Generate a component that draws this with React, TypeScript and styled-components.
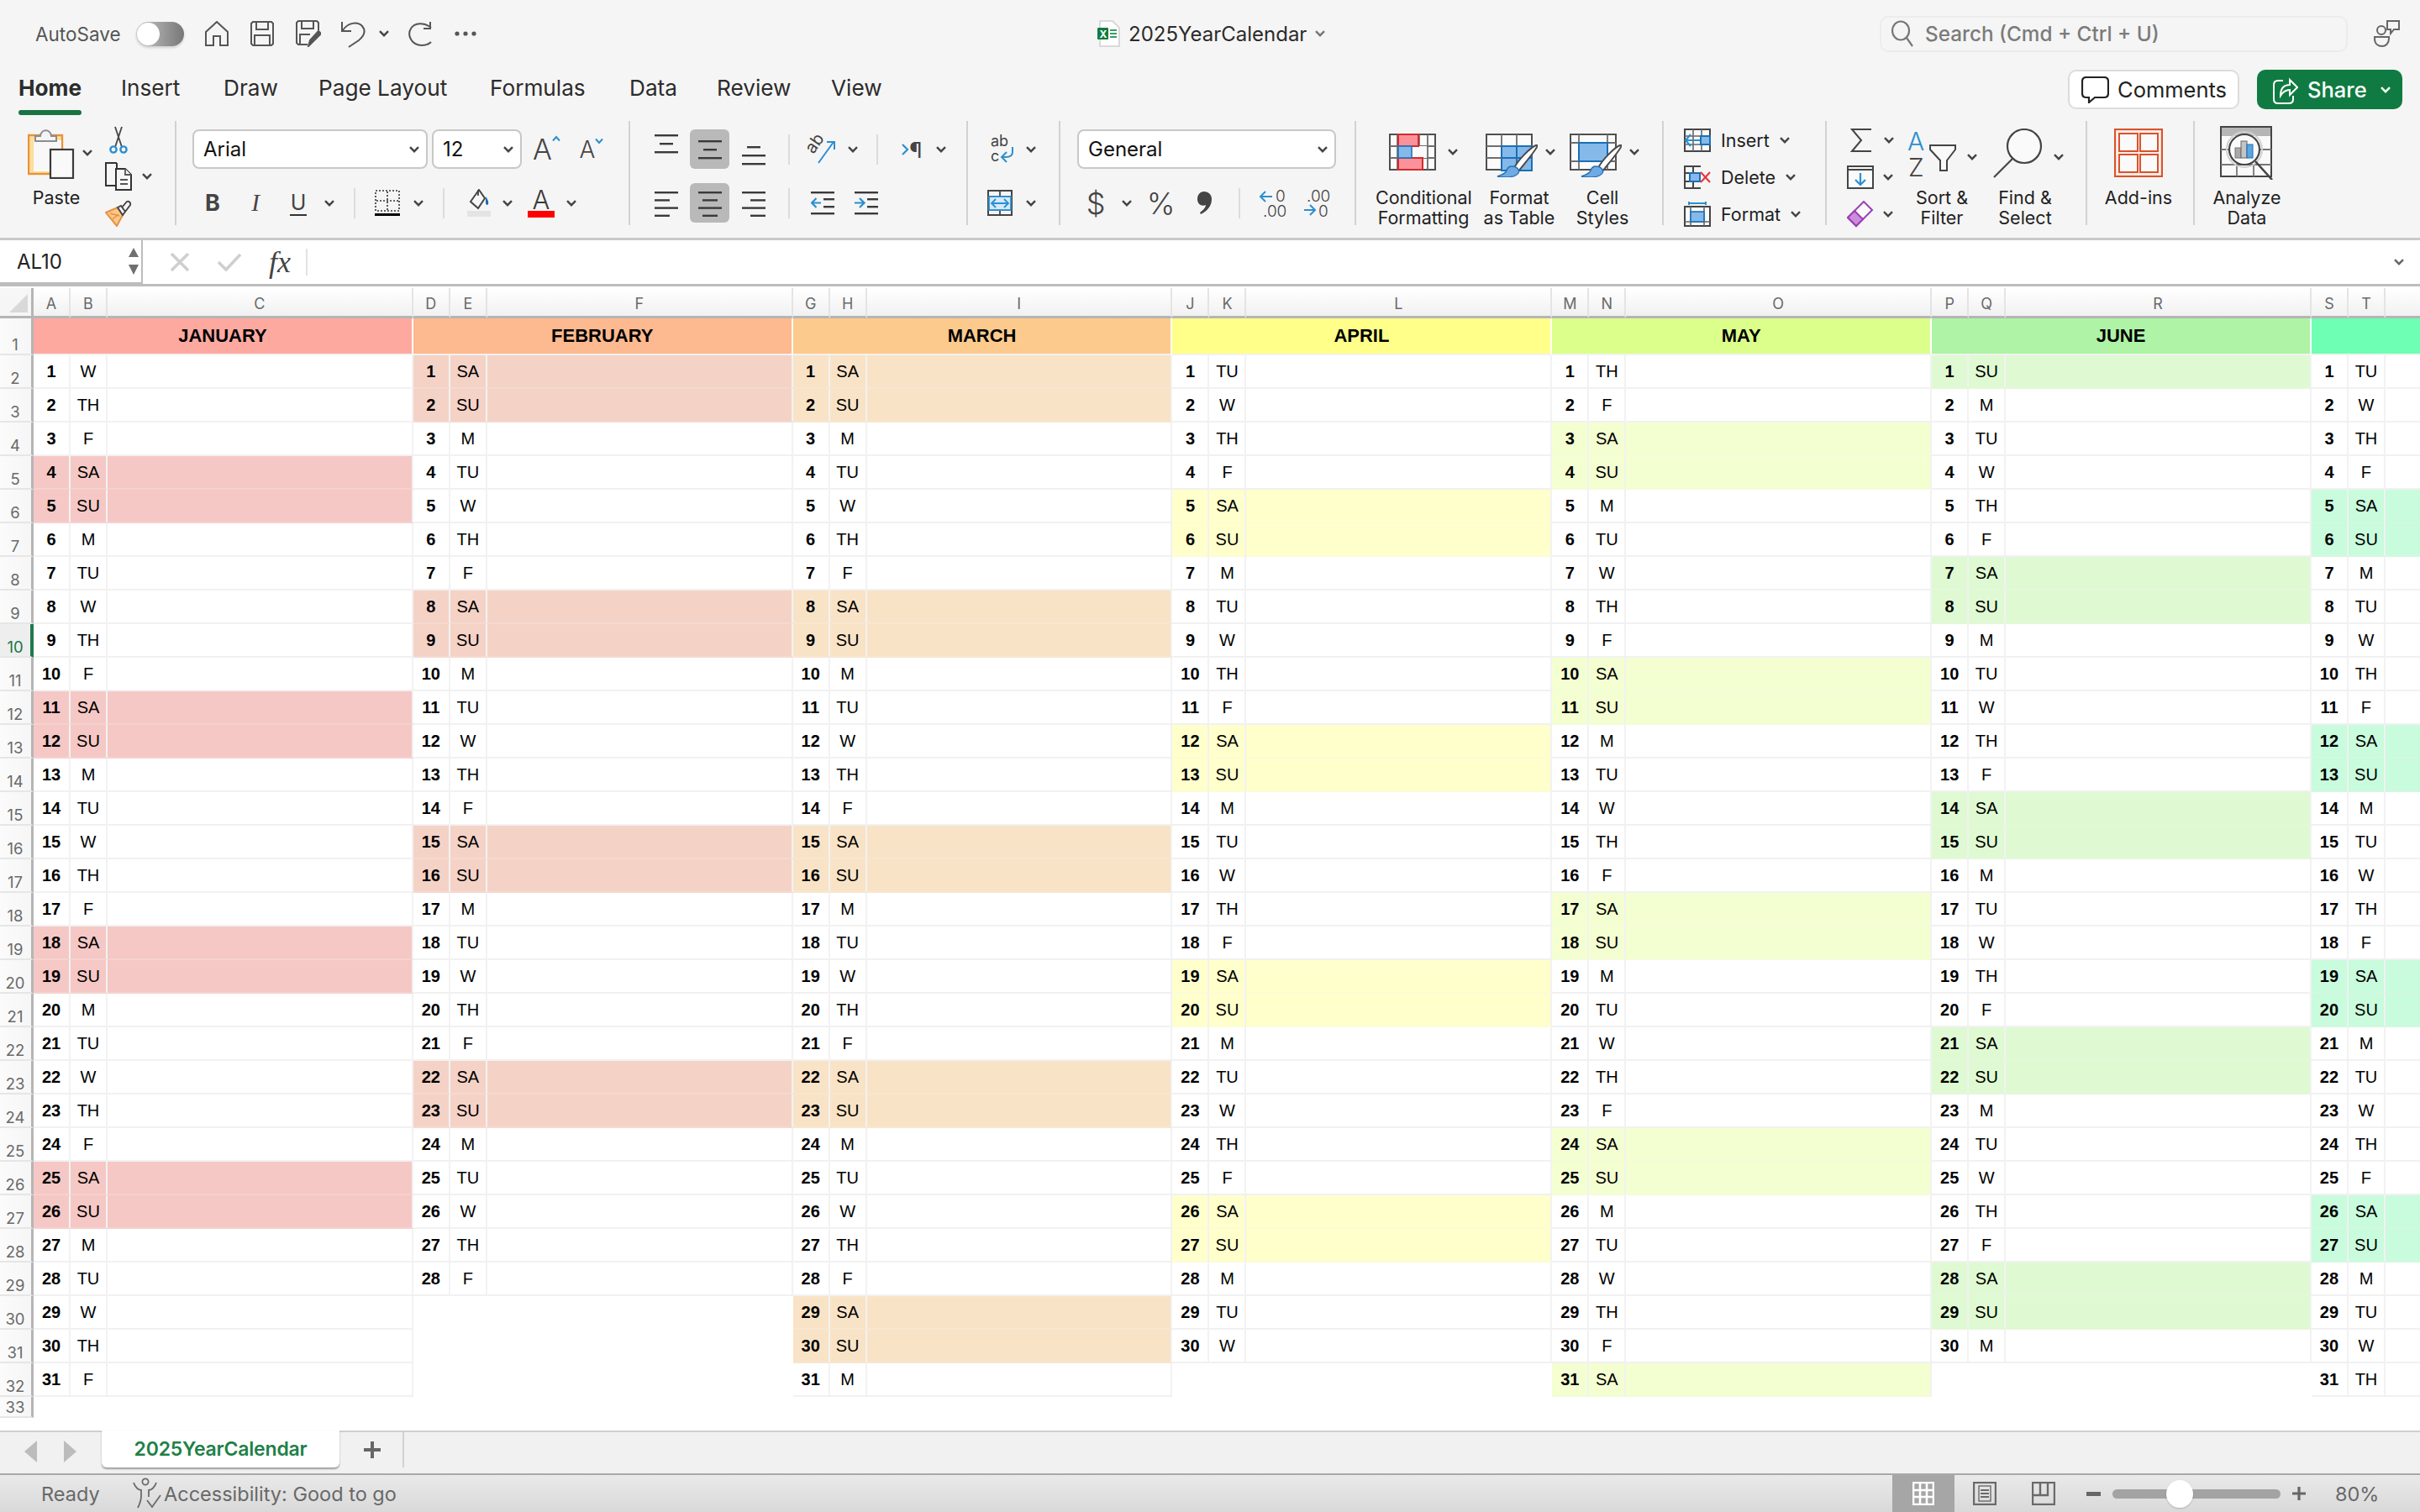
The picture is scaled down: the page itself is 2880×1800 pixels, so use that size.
import React from "react";
import styled, { createGlobalStyle } from "styled-components";

const UI_FONT = `Inter, "Noto Sans", sans-serif`;
const SHEET_FONT = `"Liberation Sans", Arial, sans-serif`;
const BLUE = "#2b8fd0";

const GlobalStyle = createGlobalStyle`
  html, body { margin: 0; padding: 0; background: #fff; }
  body { font-family: ${UI_FONT}; color: #222; overflow: hidden; }
  #root { width: 2880px; height: 1800px; }
  * { box-sizing: border-box; }
`;

const Page = styled.div`
  width: 2880px;
  height: 1800px;
  display: flex;
  flex-direction: column;
  overflow: hidden;
`;

/* ---------- title bar ---------- */

const TitleBar = styled.header`
  height: 66px;
  flex: none;
  background: #f5f5f5;
  padding-top: 14px;
  display: grid;
  grid-template-columns: 1306px 280px 1fr;
  align-items: center;
`;

const QuickBar = styled.div`
  display: flex;
  align-items: center;
  padding-left: 42px;
`;

const AutoSaveLabel = styled.span`
  width: 100px;
  font-size: 22.5px;
  color: #555;
  white-space: nowrap;
`;

const Toggle = styled.span`
  width: 57px;
  height: 29px;
  margin-left: 20px;
  border-radius: 15px;
  background: linear-gradient(90deg, #c9c9c9, #777);
  position: relative;
  box-shadow: 0 2px 3px rgba(0, 0, 0, 0.15);
  &::after {
    content: "";
    position: absolute;
    left: 1px;
    top: 1px;
    width: 27px;
    height: 27px;
    border-radius: 50%;
    background: #fff;
  }
`;

const Tool = styled.span<{ $ml?: number; $w?: number }>`
  display: inline-flex;
  align-items: center;
  justify-content: center;
  flex: none;
  margin-left: ${(p) => p.$ml ?? 0}px;
  ${(p) => (p.$w ? `width: ${p.$w}px;` : "")}
`;

const DocTitle = styled.div`
  display: flex;
  align-items: center;
  svg { flex: none; }
`;

const DocName = styled.span`
  margin-left: 10px;
  width: 213px;
  font-size: 24px;
  color: #2b2b2b;
  white-space: nowrap;
`;

const SearchArea = styled.div`
  display: flex;
  align-items: center;
  padding-left: 651px;
`;

const SearchBox = styled.div`
  width: 557px;
  height: 43px;
  border: 2px solid #ececec;
  border-radius: 10px;
  display: flex;
  align-items: center;
  padding-left: 12px;
  font-size: 24.3px;
  font-weight: 500;
  color: #7b7b7b;
  span { margin-left: 14px; }
`;

/* ---------- ribbon tabs ---------- */

const TabRow = styled.nav`
  height: 74px;
  flex: none;
  background: #f5f5f5;
  display: flex;
  align-items: center;
  padding: 3px 21px 0 22px;
`;

const RibbonTab = styled.span<{ $w: number; $active?: boolean }>`
  width: ${(p) => p.$w}px;
  font-size: 26.2px;
  font-weight: ${(p) => (p.$active ? 700 : 400)};
  color: #2c2c2c;
  position: relative;
  white-space: nowrap;
  ${(p) =>
    p.$active
      ? `&::after { content: ""; position: absolute; left: 0; top: 42px; width: 75px; height: 6px; border-radius: 3px; background: #1a7343; }`
      : ""}
`;

const TabActions = styled.div`
  margin-left: auto;
  display: flex;
  gap: 21px;
  margin-top: 4px;
`;

const CommentsButton = styled.div`
  width: 204px;
  height: 47px;
  background: #fff;
  border: 2px solid #dcdcdc;
  border-radius: 10px;
  display: flex;
  align-items: center;
  padding-left: 14px;
  font-size: 25.5px;
  color: #222;
  span { margin-left: 10px; }
`;

const ShareButton = styled.div`
  width: 173px;
  height: 47px;
  background: #0f7b42;
  border-radius: 10px;
  display: flex;
  align-items: center;
  padding-left: 19px;
  font-size: 25.5px;
  font-weight: 500;
  color: #fff;
  span { margin-left: 11px; width: 87px; }
`;

/* ---------- ribbon ---------- */

const Ribbon = styled.section`
  height: 146px;
  flex: none;
  background: #f5f5f5;
  border-bottom: 3px solid #c9c9c9;
  display: flex;
  align-items: flex-start;
  padding-top: 4px;
`;

const Group = styled.div<{ $w: number; $last?: boolean }>`
  width: ${(p) => p.$w}px;
  height: 124px;
  flex: none;
  display: flex;
  ${(p) => (p.$last ? "" : "border-right: 2px solid #d2d2d2;")}
  box-sizing: content-box;
`;

const Stack = styled.div`
  display: flex;
  flex-direction: column;
`;

const ClipTools = styled.div`
  display: flex;
  flex-direction: column;
  align-items: flex-start;
  padding-top: 6px;
`;

const CopyRow = styled.div`
  display: flex;
  align-items: center;
  margin: 9px 0 11px;
`;

const ToolRow = styled.div<{ $mt: number }>`
  display: flex;
  align-items: center;
  height: 47px;
  margin-top: ${(p) => p.$mt}px;
`;

const Select = styled.div<{ $w: number; $ml: number }>`
  width: ${(p) => p.$w}px;
  height: 47px;
  margin-left: ${(p) => p.$ml}px;
  flex: none;
  background: #fff;
  border: 2px solid #c8c8c8;
  border-radius: 8px;
  display: flex;
  align-items: center;
  justify-content: space-between;
  padding: 0 8px 0 11px;
  font-size: 24px;
  color: #111;
`;

const ThinLine = styled.span<{ $ml: number }>`
  width: 2px;
  height: 36px;
  flex: none;
  margin-left: ${(p) => p.$ml}px;
  background: #dcdcdc;
`;

const ActiveTool = styled.span<{ $ml: number }>`
  width: 47px;
  height: 47px;
  flex: none;
  margin-left: ${(p) => p.$ml}px;
  background: #b9b9b9;
  border-radius: 6px;
  display: inline-flex;
  align-items: center;
  justify-content: center;
`;

const BoldGlyph = styled.span`
  font-size: 27px;
  font-weight: 700;
  color: #444;
`;

const ItalicGlyph = styled.span`
  font-family: "Liberation Serif", serif;
  font-style: italic;
  font-size: 29px;
  color: #444;
`;

const UnderGlyph = styled.span`
  font-size: 25px;
  color: #444;
  line-height: 28px;
  border-bottom: 2px solid #333;
  padding: 0 1px;
`;

const GrowGlyph = styled.span<{ $size: number }>`
  font-size: ${(p) => p.$size}px;
  font-weight: 300;
  color: #444;
  line-height: 1;
  display: inline-flex;
  align-items: flex-start;
`;

const NumGlyph = styled.span<{ $size: number }>`
  font-size: ${(p) => p.$size}px;
  font-weight: 300;
  color: #444;
  line-height: 1;
`;

const LargeButton = styled.div<{ $w: number; $ml?: number }>`
  width: ${(p) => p.$w}px;
  margin-left: ${(p) => p.$ml ?? 0}px;
  flex: none;
  display: flex;
  flex-direction: column;
`;

const LargeIcons = styled.div<{ $top: number; $center?: boolean }>`
  height: 79px;
  flex: none;
  padding-top: ${(p) => p.$top}px;
  display: flex;
  align-items: flex-start;
  ${(p) => (p.$center ? "justify-content: center;" : "")}
  svg { display: block; }
`;

const ChevronSlot = styled.span<{ $ml: number; $mt: number }>`
  margin-left: ${(p) => p.$ml}px;
  margin-top: ${(p) => p.$mt}px;
  flex: none;
  display: inline-flex;
`;

const LargeLabel = styled.div`
  font-size: 21.5px;
  line-height: 24px;
  color: #222;
  text-align: center;
  white-space: nowrap;
`;

const CellRow = styled.div`
  height: 44px;
  display: flex;
  align-items: center;
  padding-left: 24px;
  font-size: 21.5px;
  color: #222;
  white-space: nowrap;
`;

const CellStack = styled.div`
  padding-top: 1px;
`;

const EditRow = styled.div`
  height: 44px;
  display: flex;
  align-items: center;
  width: 87px;
`;

/* ---------- formula bar ---------- */

const FormulaBar = styled.div`
  height: 55px;
  flex: none;
  background: #fff;
  border-bottom: 3px solid #bdbdbd;
  display: flex;
  align-items: center;
`;

const NameBox = styled.div`
  width: 170px;
  height: 52px;
  flex: none;
  border: 2px solid #bcbcbc;
  border-left: none;
  border-top: none;
  display: flex;
  align-items: center;
  justify-content: space-between;
  padding: 0 2px 0 20px;
  font-size: 24px;
  color: #222;
`;

const FxGlyph = styled.span`
  font-family: "Liberation Serif", serif;
  font-style: italic;
  font-size: 36px;
  color: #444;
  width: 30px;
  margin-left: 32px;
`;

const FxDivider = styled.span`
  width: 2px;
  height: 32px;
  margin-left: 14px;
  background: #e2e2e2;
`;

const FormulaEnd = styled.span`
  margin-left: auto;
  margin-right: 19px;
  display: inline-flex;
`;

/* ---------- sheet ---------- */

const Sheet = styled.div`
  flex: 1;
  min-height: 0;
  overflow: hidden;
  background: #fff;
  padding-top: 2px;
`;

const SheetGrid = styled.div`
  display: grid;
  grid-template-columns: 40px repeat(7, 44px 44px 363.83px);
  grid-template-rows: 36px 44px repeat(31, 40px) 25px 40px;
  width: 3260px;
`;

const Corner = styled.div`
  background: #f6f6f6;
  border-right: 3px solid #b5b5b5;
  border-bottom: 3px solid #b5b5b5;
  display: flex;
  align-items: flex-end;
  justify-content: flex-end;
  padding: 0 4px 4px 0;
`;

const ColHead = styled.div`
  background: linear-gradient(#fff, #f1f1f1);
  border-right: 2px solid #e4e4e4;
  border-bottom: 3px solid #b5b5b5;
  display: flex;
  align-items: center;
  justify-content: center;
  padding-top: 3px;
  font-size: 18px;
  color: #6a6a6a;
`;

const RowHead = styled.div<{ $on?: boolean }>`
  background: ${(p) => (p.$on ? "#eeeeee" : "linear-gradient(90deg, #fbfbfb, #f6f6f6)")};
  border-right: ${(p) => (p.$on ? "4px solid #1f7a4d" : "3px solid #b5b5b5")};
  border-bottom: 2px solid #e6e6e6;
  display: flex;
  align-items: flex-end;
  justify-content: center;
  padding-right: ${(p) => (p.$on ? "0" : "1px")};
  font-size: 18.5px;
  line-height: 22px;
  color: ${(p) => (p.$on ? "#217346" : "#6a6a6a")};
`;

const MonthHead = styled.div<{ $fill: string }>`
  grid-column: span 3;
  background: ${(p) => p.$fill};
  border-right: 2px solid #fff;
  border-bottom: 2px solid #f2f2f2;
  display: flex;
  align-items: center;
  justify-content: center;
  padding-bottom: 1px;
  font-family: ${SHEET_FONT};
  font-size: 22px;
  font-weight: 700;
  color: #000;
`;

const DayCell = styled.div<{ $fill?: string; $bold?: boolean; $blank?: boolean }>`
  background: ${(p) => p.$fill ?? "#fff"};
  ${(p) =>
    p.$blank
      ? ""
      : `border-right: 2px solid #f2f2f2; border-bottom: 2px solid ${p.$fill ? "#f4eeee40" : "#f1f1f1"};`}
  display: flex;
  align-items: center;
  justify-content: center;
  font-family: ${SHEET_FONT};
  font-size: 20px;
  font-weight: ${(p) => (p.$bold ? 700 : 400)};
  color: #000;
`;

const SheetEdge = styled.div`
  background: #fff;
`;

/* ---------- sheet tabs and status ---------- */

const SheetTabs = styled.div`
  height: 51px;
  flex: none;
  background: #f1f1f1;
  border-top: 2px solid #cfcfcf;
  display: flex;
  align-items: flex-start;
`;

const TabNav = styled.div`
  width: 121px;
  height: 46px;
  display: flex;
  align-items: center;
  padding-left: 29px;
  gap: 32px;
`;

const ActiveSheet = styled.div`
  width: 283px;
  height: 44px;
  margin-top: -2px;
  background: #fff;
  border-radius: 0 0 6px 6px;
  box-shadow: 0 1.5px 2px rgba(0, 0, 0, 0.35);
  display: flex;
  align-items: center;
  justify-content: center;
  font-size: 23px;
  font-weight: 600;
  color: #1f8048;
  letter-spacing: -0.2px;
`;

const AddSheet = styled.div`
  width: 77px;
  height: 42px;
  padding-left: 3px;
  border-right: 2px solid #d2d2d2;
  display: flex;
  align-items: center;
  justify-content: center;
`;

const StatusBar = styled.footer`
  height: 46px;
  flex: none;
  background: linear-gradient(#e9e9e9, #d9d9d9);
  border-top: 2px solid #a9a9a9;
  display: flex;
  align-items: center;
  padding-left: 49px;
  font-size: 23.5px;
  color: #686868;
`;

const Ready = styled.span`
  width: 109px;
`;

const A11yText = styled.span`
  margin-left: 3px;
  white-space: nowrap;
`;

const StatusRight = styled.div`
  margin-left: auto;
  height: 100%;
  display: flex;
  align-items: center;
`;

const ViewButton = styled.span<{ $on?: boolean; $w: number }>`
  width: ${(p) => p.$w}px;
  height: 100%;
  display: inline-flex;
  align-items: center;
  justify-content: center;
  ${(p) => (p.$on ? "background: #a6a6a6;" : "")}
`;

const ZoomTrack = styled.span`
  width: 200px;
  height: 11px;
  margin-left: 14px;
  border-radius: 6px;
  background: #a3a3a3;
  position: relative;
  &::after {
    content: "";
    position: absolute;
    left: 64px;
    top: -11px;
    width: 32px;
    height: 33px;
    border-radius: 50%;
    background: #fff;
    box-shadow: 0 1px 2px rgba(0, 0, 0, 0.2);
  }
`;

const ZoomValue = styled.span`
  width: 51px;
  margin: 0 50px 0 35px;
  white-space: nowrap;
`;

/* ---------- icons ---------- */

const Chevron = ({ color = "#444" }: { color?: string }) => (
  <svg width="12" height="8" viewBox="0 0 12 8" fill="none">
    <path d="M1 1.2 6 6.2 11 1.2" stroke={color} strokeWidth="2.4" />
  </svg>
);

const Lines = ({ widths, top, gap = 10 }: { widths: number[]; top: number; gap?: number }) => (
  <svg width="28" height="40" viewBox="0 0 28 40">
    {widths.map((w, i) => (
      <rect key={i} x={(28 - w) / 2} y={top + i * gap} width={w} height="2.4" fill="#3a3a3a" />
    ))}
  </svg>
);

const LinesLR = ({ right }: { right?: boolean }) => (
  <svg width="28" height="40" viewBox="0 0 28 40">
    {[28, 18, 28, 18].map((w, i) => (
      <rect key={i} x={right ? 28 - w : 0} y={6 + i * 9.2} width={w} height="2.4" fill="#3a3a3a" />
    ))}
  </svg>
);

const Indent = ({ flip }: { flip?: boolean }) => (
  <svg width="28" height="30" viewBox="0 0 28 30" fill="none">
    <rect y="1" width="28" height="2.4" fill="#3a3a3a" />
    <rect y="26" width="28" height="2.4" fill="#3a3a3a" />
    <rect x="15" y="9" width="13" height="2.4" fill="#3a3a3a" />
    <rect x="15" y="18" width="13" height="2.4" fill="#3a3a3a" />
    <path d={flip ? "M0 14.5H11M6 9l5.5 5.5L6 20" : "M12 14.5H1M6.5 9 1 14.5 6.5 20"} stroke={BLUE} strokeWidth="2.2" />
  </svg>
);

const PasteIcon = () => (
  <svg width="56" height="60" viewBox="0 0 56 60" fill="none">
    <rect x="1" y="8" width="40" height="46" fill="#fbdf9a" stroke="#e8923b" strokeWidth="2.4" />
    <rect x="7" y="14" width="33" height="37" fill="#f8f8f8" />
    <path d="M9 15V9h6c1-9 12-9 13 0h6v6z" fill="#f4f4f4" stroke="#8c8c8c" strokeWidth="2" />
    <rect x="27" y="25" width="27" height="34" fill="#f9f9f9" stroke="#3b3b3b" strokeWidth="2.2" />
  </svg>
);

const ScissorsIcon = () => (
  <svg width="22" height="34" viewBox="0 0 22 34" fill="none">
    <path d="M7 1l8 24M15 1 7 25" stroke="#444" strokeWidth="1.8" />
    <circle cx="5" cy="28" r="3.6" stroke={BLUE} strokeWidth="2.4" />
    <circle cx="17" cy="28" r="3.6" stroke={BLUE} strokeWidth="2.4" />
  </svg>
);

const CopyIcon = () => (
  <svg width="32" height="34" viewBox="0 0 32 34" fill="#f6f6f6">
    <path d="M14 1H1v27h11" stroke="#333" strokeWidth="2" />
    <path d="M14 1l0 6" stroke="#333" strokeWidth="2" />
    <path d="M13 8h11l7 7v18H13z" stroke="#333" strokeWidth="2" />
    <path d="M24 8v7h7M18 21h9M18 26h9" stroke="#555" strokeWidth="1.8" />
  </svg>
);

const BrushIcon = () => (
  <svg width="32" height="32" viewBox="0 0 32 32" fill="none">
    <path d="M1 15 15 9l6 9-7 13z" fill="#f9c78e" stroke="#e8923b" strokeWidth="2" />
    <path d="M6 16l11 3M9 23l7-6" stroke="#e8923b" strokeWidth="1.6" />
    <path d="M15 9l4-2 5 7-3 4zM20 9l6-7c2-1 5 1 4 4l-6 8" fill="#f5f5f5" stroke="#444" strokeWidth="1.9" />
  </svg>
);

const BorderIcon = () => (
  <svg width="30" height="32" viewBox="0 0 30 32" fill="none">
    <rect x="1" y="1" width="28" height="24" stroke="#333" strokeWidth="1.6" strokeDasharray="2 2" />
    <path d="M15 2v23M2 13h26" stroke="#333" strokeWidth="1.6" strokeDasharray="2 2" />
    <rect y="28" width="30" height="3" fill="#000" />
  </svg>
);

const FillIcon = () => (
  <svg width="28" height="34" viewBox="0 0 28 34" fill="none">
    <rect x="0" y="26" width="28" height="7" fill="#e4e4e4" />
    <path d="M14 1 4 15l9 8 8-12z" fill="#f7f7f7" stroke="#444" strokeWidth="2" />
    <path d="M13 1v7" stroke="#444" strokeWidth="1.8" />
    <path d="M22 9c2 3 4 6 3 9-1 2-3 1-3-2z" fill="#1868b7" />
  </svg>
);

const FontColor = styled.span`
  display: inline-flex;
  flex-direction: column;
  align-items: center;
  width: 32px;
  font-size: 31px;
  font-weight: 300;
  line-height: 27px;
  color: #3a3a3a;
  &::after {
    content: "";
    width: 32px;
    height: 8px;
    background: #ff0000;
  }
`;

const SmallCaret = ({ down }: { down?: boolean }) => (
  <svg width="10" height="8" viewBox="0 0 10 8" fill="none">
    <path d={down ? "M1 1.5 5 6 9 1.5" : "M1 6.5 5 2 9 6.5"} stroke={BLUE} strokeWidth="2" />
  </svg>
);

const OrientIcon = () => (
  <svg width="34" height="36" viewBox="0 0 34 36" fill="none" overflow="visible">
    <text x="0" y="0" transform="translate(6 24) rotate(-55)" fontSize="20" fontFamily="Inter" fill="#444">ab</text>
    <path d="M12 34 30 9M22 9h9v9" stroke={BLUE} strokeWidth="2" />
  </svg>
);

const ParaIcon = () => (
  <svg width="26" height="30" viewBox="0 0 26 30" fill="none" overflow="visible">
    <path d="M2 9l6 6-6 6" stroke={BLUE} strokeWidth="2.2" />
    <text x="10" y="25" fontSize="26" fontFamily="Inter" fill="#444">¶</text>
  </svg>
);

const WrapIcon = () => (
  <svg width="30" height="34" viewBox="0 0 30 34" fill="none" overflow="visible">
    <text x="0" y="13" fontSize="18" fontFamily="Inter" fill="#444">ab</text>
    <text x="0" y="31" fontSize="18" fontFamily="Inter" fill="#444">c</text>
    <path d="M26 14v6c0 4-3 6-8 6h-5M19 20l-6 6 6 6" stroke={BLUE} strokeWidth="2" />
  </svg>
);

const MergeIcon = () => (
  <svg width="30" height="32" viewBox="0 0 30 32" fill="none">
    <rect x="1" y="1" width="28" height="29" stroke="#444" strokeWidth="2" />
    <path d="M1 8h28M1 24h28M15 1v7M15 24v6" stroke="#444" strokeWidth="1.8" />
    <rect x="2" y="8" width="26" height="16" fill="#d5e9f7" stroke={BLUE} strokeWidth="1.8" />
    <path d="M5 16h20M10 11l-5 5 5 5M20 11l5 5-5 5" stroke={BLUE} strokeWidth="1.8" />
  </svg>
);

const CommaStyleIcon = () => (
  <svg width="18" height="27" viewBox="0 0 18 27" fill="#444">
    <path d="M9 0c5 0 9 3.500 9 9 0 8-5 14-13 18l-1-2c4-3 7-6 7-9-1 .5-2 .7-3 .7-4 0-7-3-7-7.500C1 4 4 0 9 0z" />
  </svg>
);

const DecimalIcon = ({ more }: { more?: boolean }) => (
  <svg width="32" height="34" viewBox="0 0 32 34" fill="none" overflow="visible">
    {more ? (
      <>
        <text x="4" y="15" fontSize="19" fontFamily="Inter" fontWeight="300" fill="#444">.00</text>
        <path d="M1 25h13M8 19l6 6-6 6" stroke={BLUE} strokeWidth="2" />
        <text x="18" y="33" fontSize="19" fontFamily="Inter" fontWeight="300" fill="#444">0</text>
      </>
    ) : (
      <>
        <path d="M2 9h14M8 3 2 9l6 6" stroke={BLUE} strokeWidth="2" />
        <text x="20" y="15" fontSize="19" fontFamily="Inter" fontWeight="300" fill="#444">0</text>
        <text x="5" y="33" fontSize="19" fontFamily="Inter" fontWeight="300" fill="#444">.00</text>
      </>
    )}
  </svg>
);

const ConditionalIcon = () => (
  <svg width="56" height="44" viewBox="0 0 56 44" fill="none">
    <rect x="1" y="1" width="54" height="42" fill="#fbfbfb" stroke="#4f4f4f" strokeWidth="2" />
    <path d="M36 1v42M46 1v42M1 15h54M1 29h54M10 1v42" stroke="#6e6e6e" strokeWidth="1.8" />
    <rect x="27" y="15" width="18" height="14" fill="#fbfbfb" />
    <rect x="11" y="1" width="24" height="14" fill="#fb929b" stroke="#d42a2a" strokeWidth="2" />
    <rect x="11" y="29" width="29" height="14" fill="#fb929b" stroke="#d42a2a" strokeWidth="2" />
    <rect x="11" y="15" width="16" height="14" fill="#84b9ea" stroke="#2272b8" strokeWidth="1.6" />
  </svg>
);

const PaintBrush = () => (
  <>
    <path d="M60 14c-6 2-22 18-26 27l5 4C46 36 60 20 62 14z" fill="#fff" stroke="#4a4a4a" strokeWidth="2" />
    <path d="M31 39c6 0 10 4 8 8-3 5-14 6-25 4 6-2 10-4 11-7 1-3 3-5 6-5z" fill="#6fabe2" stroke="#2272b8" strokeWidth="1.4" />
  </>
);

const TableIcon = () => (
  <svg width="62" height="52" viewBox="0 0 62 52" fill="none">
    <rect x="1" y="1" width="54" height="42" fill="#fbfbfb" stroke="#4f4f4f" strokeWidth="2" />
    <path d="M19 1v42M37 1v42M1 15h54M1 29h54" stroke="#6e6e6e" strokeWidth="1.8" />
    <rect x="19" y="15" width="36" height="29" fill="#84b9ea" stroke="#1b6fb5" strokeWidth="2" />
    <path d="M37 15v29M19 29h36" stroke="#1b6fb5" strokeWidth="2" />
    <PaintBrush />
  </svg>
);

const StylesIcon = () => (
  <svg width="62" height="52" viewBox="0 0 62 52" fill="none">
    <rect x="1" y="1" width="54" height="42" fill="#fbfbfb" stroke="#4f4f4f" strokeWidth="2" />
    <path d="M11 1v42M45 1v42M1 11h54M1 33h54" stroke="#6e6e6e" strokeWidth="1.8" />
    <rect x="11" y="11" width="34" height="22" fill="#84b9ea" stroke="#1b6fb5" strokeWidth="2" />
    <PaintBrush />
  </svg>
);

const InsertCells = () => (
  <svg width="32" height="28" viewBox="0 0 32 28" fill="none">
    <rect x="1" y="1" width="30" height="26" fill="#fbfbfb" stroke="#444" strokeWidth="2" />
    <path d="M11 1v26M21 1v26M1 9h30M1 19h30" stroke="#666" strokeWidth="1.6" />
    <rect x="20" y="9" width="11" height="10" fill="#84b9ea" stroke="#1b6fb5" strokeWidth="2" />
    <path d="M19 14H2M8 7 2 14l6 7" stroke={BLUE} strokeWidth="2.2" />
  </svg>
);

const DeleteCells = () => (
  <svg width="32" height="28" viewBox="0 0 32 28" fill="none">
    <path d="M20 1H1v26h19M1 9h19M1 19h19M11 1v8M11 19v8" stroke="#444" strokeWidth="2" />
    <rect x="7" y="9" width="12" height="10" fill="#84b9ea" stroke="#1b6fb5" strokeWidth="2" />
    <path d="M20 8l11 12M31 8 20 20" stroke="#e5393d" strokeWidth="2.2" />
  </svg>
);

const FormatCells = () => (
  <svg width="32" height="30" viewBox="0 0 32 30" fill="none">
    <path d="M6 2h20M6 0v4M26 0v4" stroke={BLUE} strokeWidth="2" />
    <rect x="1" y="6" width="30" height="23" fill="#fbfbfb" stroke="#444" strokeWidth="2" />
    <path d="M8 6v23M24 6v23M1 24h30" stroke="#666" strokeWidth="1.6" />
    <rect x="8" y="12" width="16" height="12" fill="#84b9ea" stroke="#1b6fb5" strokeWidth="1.6" />
  </svg>
);

const SigmaIcon = () => (
  <svg width="25" height="28" viewBox="0 0 25 28" fill="none">
    <path d="M25 1H2l11 13L2 27h23" stroke="#444" strokeWidth="2" />
  </svg>
);

const FillDown = () => (
  <svg width="32" height="28" viewBox="0 0 32 28" fill="none">
    <rect x="1" y="1" width="30" height="26" fill="#fbfbfb" stroke="#444" strokeWidth="2" />
    <path d="M1 5h30" stroke="#444" strokeWidth="2" />
    <path d="M16 9v14M10 17l6 6 6-6" stroke={BLUE} strokeWidth="2.2" />
  </svg>
);

const EraserIcon = () => (
  <svg width="32" height="32" viewBox="0 0 32 32" fill="none">
    <path d="M1 20 20 1l10 10-19 19z" fill="#fafafa" stroke="#9b3fb5" strokeWidth="2" />
    <path d="M1 20l8-8 10 10-8 8z" fill="#cc8cdc" stroke="#9b3fb5" strokeWidth="2" />
  </svg>
);

const SortIcon = () => (
  <svg width="58" height="58" viewBox="0 0 58 58" fill="none" overflow="visible">
    <text x="-1" y="25" fontSize="30" fontFamily="Inter" fontWeight="300" fill={BLUE}>A</text>
    <text x="0" y="56" fontSize="30" fontFamily="Inter" fontWeight="300" fill="#444">Z</text>
    <path d="M26 19h30v5L46 37v12h-8V37L26 24z" fill="#f9f9f9" stroke="#444" strokeWidth="2" />
  </svg>
);

const FindIcon = () => (
  <svg width="60" height="60" viewBox="0 0 60 60" fill="none">
    <circle cx="38" cy="21" r="20" fill="#fafafa" stroke="#444" strokeWidth="2.2" />
    <path d="M24 36 2 58" stroke="#444" strokeWidth="2.2" />
  </svg>
);

const AddInsIcon = () => (
  <svg width="58" height="58" viewBox="0 0 58 58" fill="none">
    <rect x="1" y="1" width="56" height="56" fill="#fbeee9" stroke="#d9532c" strokeWidth="2.2" />
    <rect x="6" y="6" width="22" height="21" fill="#fafafa" stroke="#d9532c" strokeWidth="2" />
    <rect x="31" y="6" width="21" height="21" fill="#fafafa" stroke="#d9532c" strokeWidth="2" />
    <rect x="6" y="31" width="22" height="21" fill="#fafafa" stroke="#d9532c" strokeWidth="2" />
    <rect x="31" y="31" width="21" height="21" fill="#fafafa" stroke="#d9532c" strokeWidth="2" />
  </svg>
);

const AnalyzeIcon = () => (
  <svg width="64" height="64" viewBox="0 0 64 64" fill="none">
    <rect x="1" y="1" width="60" height="59" fill="#fafafa" stroke="#444" strokeWidth="2" />
    <rect x="2" y="2" width="58" height="10" fill="#b6b6b6" />
    <path d="M1 28h60M1 46h60M20 46v14M40 46v14" stroke="#777" strokeWidth="1.8" />
    <circle cx="29" cy="28" r="18" fill="#fafafa" stroke="#444" strokeWidth="2.2" />
    <circle cx="29" cy="28" r="21" stroke="#d0d0d0" strokeWidth="2" />
    <rect x="18" y="26" width="7" height="12" fill="#a9a9a9" stroke="#777" />
    <rect x="25" y="18" width="7" height="20" fill="#c4c4c4" stroke="#666" />
    <rect x="32" y="22" width="7" height="16" fill="#5aa7e0" stroke="#1b6fb5" />
    <path d="M42 42 62 64" stroke="#444" strokeWidth="2.6" />
  </svg>
);

const HomeIcon = () => (
  <svg width="28" height="30" viewBox="0 0 28 30" fill="none" stroke="#555" strokeWidth="2">
    <path d="M1 13 14 1l13 12v16h-9V18h-8v11H1z" />
  </svg>
);

const SaveIcon = () => (
  <svg width="28" height="30" viewBox="0 0 28 30" fill="none" stroke="#555" strokeWidth="2">
    <path d="M3 1h22l2 2v24l-2 2H3l-2-2V3z" />
    <path d="M7 1v9h14V1M5 29V17h18v12" />
  </svg>
);

const SaveAsIcon = () => (
  <svg width="30" height="32" viewBox="0 0 30 32" fill="none" stroke="#555" strokeWidth="2">
    <path d="M14 29H3l-2-2V3l2-2h22l2 2v9" />
    <path d="M7 1v9h14V1M5 28V17h12" />
    <path d="M15 31l2-7 10-11 3 3-11 11z" fill="#555" />
  </svg>
);

const UndoIcon = () => (
  <svg width="29" height="33" viewBox="0 0 29 33" fill="none" stroke="#555" strokeWidth="2">
    <path d="M1 2v11h11" />
    <path d="M2 12C8 3 19 1 25 7c5 6 2 12-4 17L9 32" />
  </svg>
);

const RedoIcon = () => (
  <svg width="28" height="30" viewBox="0 0 28 30" fill="none" stroke="#555" strokeWidth="2">
    <path d="M27 8C19 1 7 2 3 9c-5 8 1 20 13 20 4 0 8-1 11-4" />
    <path d="M26 1v8h-8" />
  </svg>
);

const MoreIcon = () => (
  <svg width="26" height="6" viewBox="0 0 26 6" fill="#555">
    <circle cx="3" cy="3" r="2.6" />
    <circle cx="13" cy="3" r="2.6" />
    <circle cx="23" cy="3" r="2.6" />
  </svg>
);

const ExcelLogo = () => (
  <svg width="27" height="32" viewBox="0 0 27 32">
    <path d="M3 1h15l8 8v22H3z" fill="#fff" stroke="#cfcfcf" strokeWidth="1.5" />
    <rect x="0" y="9" width="13" height="14" rx="1" fill="#107c41" />
    <text x="2.5" y="20.5" fontSize="12" fontWeight="700" fontFamily="Inter" fill="#fff">X</text>
    <path d="M15 11h8v2h-8zM15 15h8v2h-8zM15 19h8v2h-8z" fill="#3b9a63" />
  </svg>
);

const SearchIcon = () => (
  <svg width="26" height="32" viewBox="0 0 26 32" fill="none" stroke="#777" strokeWidth="2.2">
    <ellipse cx="11" cy="12.5" rx="10" ry="11" />
    <path d="M18 21l7 10" />
  </svg>
);

const PeopleIcon = () => (
  <svg width="32" height="34" viewBox="0 0 32 34" fill="none" stroke="#666" strokeWidth="2">
    <circle cx="10" cy="13" r="5" />
    <path d="M2 21h17v2c0 6-4 9-8 9-5 0-9-3-9-9z" />
    <path d="M17 2h14v10h-6l-4 5v-5h-4z" />
  </svg>
);

const CommentIcon = () => (
  <svg width="33" height="32" viewBox="0 0 33 32" fill="none" stroke="#222" strokeWidth="2.2">
    <path d="M6 1h21c3 0 5 2 5 5v14c0 3-2 5-5 5H16l-7 6v-6H6c-3 0-5-2-5-5V6c0-3 2-5 5-5z" />
  </svg>
);

const ShareIcon = () => (
  <svg width="30" height="34" viewBox="0 0 30 34" fill="none" stroke="#fff" strokeWidth="2">
    <path d="M12 6H6c-3 0-5 2-5 5v17c0 3 2 5 5 5h13c3 0 5-2 5-5v-4" />
    <path d="M9 24c0-9 4-13 11-13V5l9 9-9 9v-6c-5 0-8 2-11 7z" />
  </svg>
);

const Stepper = () => (
  <svg width="14" height="36" viewBox="0 0 14 36" fill="#6f6f6f">
    <path d="M7 2l6 11H1zM1 22h12L7 34z" />
  </svg>
);

const CancelIcon = () => (
  <svg width="24" height="24" viewBox="0 0 24 24" fill="none" stroke="#cfcfcf" strokeWidth="3.6">
    <path d="M2 2l20 20M22 2 2 22" />
  </svg>
);

const ConfirmIcon = () => (
  <svg width="30" height="22" viewBox="0 0 30 22" fill="none" stroke="#cfcfcf" strokeWidth="3.6">
    <path d="M2 11l9 9L28 2" />
  </svg>
);

const CornerMark = () => (
  <svg width="22" height="22" viewBox="0 0 22 22">
    <path d="M22 0v22H0z" fill="#d9d9d9" />
  </svg>
);

const NavArrow = ({ right }: { right?: boolean }) => (
  <svg width="15" height="26" viewBox="0 0 15 26" fill="#bcbcbc">
    <path d={right ? "M0 0l15 13L0 26z" : "M15 0 0 13l15 13z"} />
  </svg>
);

const PlusIcon = ({ size = 20 }: { size?: number }) => (
  <svg width={size} height={size} viewBox="0 0 20 20" fill="#666">
    <path d="M8 0h4v8h8v4h-8v8H8v-8H0V8h8z" />
  </svg>
);

const A11yIcon = () => (
  <svg width="34" height="38" viewBox="0 0 34 38" fill="none" stroke="#6a6a6a" strokeWidth="1.8">
    <circle cx="15" cy="5" r="3.6" />
    <path d="M1 6c2 6 6 9 9 9v7c0 5-2 10-4 14M28 6c-2 6-6 9-9 9v8" />
    <path d="M17 27l6 8 10-14" />
  </svg>
);

const GridViewIcon = () => (
  <svg width="26" height="28" viewBox="0 0 26 28" fill="none" stroke="#fff" strokeWidth="2.6">
    <rect x="1" y="1" width="24" height="26" />
    <path d="M9 1v26M17 1v26M1 10h24M1 18h24" />
  </svg>
);

const PageViewIcon = () => (
  <svg width="28" height="28" viewBox="0 0 28 28" fill="none" stroke="#6a6a6a" strokeWidth="2.4">
    <rect x="1" y="1" width="26" height="26" />
    <rect x="7" y="5" width="14" height="18" strokeWidth="1.4" />
    <path d="M9 10h10M9 14h10M9 18h10" strokeWidth="1.8" />
  </svg>
);

const BreakViewIcon = () => (
  <svg width="28" height="28" viewBox="0 0 28 28" fill="none" stroke="#6a6a6a" strokeWidth="2.4">
    <rect x="1" y="1" width="26" height="26" />
    <path d="M1 16h18V1M10 1v15" />
  </svg>
);

const MinusIcon = () => (
  <svg width="17" height="5" viewBox="0 0 17 5" fill="#666">
    <rect width="17" height="5" />
  </svg>
);

/* ---------- data ---------- */

const RIBBON_TABS = [
  { name: "Home", w: 122 },
  { name: "Insert", w: 122 },
  { name: "Draw", w: 113 },
  { name: "Page Layout", w: 204 },
  { name: "Formulas", w: 166 },
  { name: "Data", w: 104 },
  { name: "Review", w: 136 },
  { name: "View", w: 70 },
];

const COLUMN_NAMES = "ABCDEFGHIJKLMNOPQRSTU".split("");
const WEEKDAYS = ["SU", "M", "TU", "W", "TH", "F", "SA"];

const MONTHS = [
  { name: "JANUARY", head: "#fda9a0", weekend: "#f5c8c5", days: 31 },
  { name: "FEBRUARY", head: "#fdb98f", weekend: "#f5d2c6", days: 28 },
  { name: "MARCH", head: "#fdca8d", weekend: "#f9e3c6", days: 31 },
  { name: "APRIL", head: "#ffff89", weekend: "#ffffcc", days: 30 },
  { name: "MAY", head: "#dcff8b", weekend: "#f4ffd1", days: 31 },
  { name: "JUNE", head: "#aef3a6", weekend: "#dffad2", days: 30 },
  { name: "JULY", head: "#6fffb4", weekend: "#c9fbdd", days: 31 },
];

const SELECTED_ROW = 10;

function dayRow(row: number) {
  const day = row - 1;
  return MONTHS.flatMap((month, m) => {
    if (day > month.days) {
      return [
        <DayCell key={`${m}a`} $blank />,
        <DayCell key={`${m}b`} $blank />,
        <DayCell key={`${m}c`} $blank />,
      ];
    }
    const label = WEEKDAYS[new Date(2025, m, day).getDay()];
    const fill = label === "SA" || label === "SU" ? month.weekend : undefined;
    return [
      <DayCell key={`${m}a`} $fill={fill} $bold>{day}</DayCell>,
      <DayCell key={`${m}b`} $fill={fill}>{label}</DayCell>,
      <DayCell key={`${m}c`} $fill={fill} />,
    ];
  });
}

export default function App() {
  return (
    <Page>
      <GlobalStyle />
      <TitleBar>
        <QuickBar>
          <AutoSaveLabel>AutoSave</AutoSaveLabel>
          <Toggle />
          <Tool $ml={25}><HomeIcon /></Tool>
          <Tool $ml={26}><SaveIcon /></Tool>
          <Tool $ml={26}><SaveAsIcon /></Tool>
          <Tool $ml={24}><UndoIcon /></Tool>
          <Tool $ml={16}><Chevron /></Tool>
          <Tool $ml={23}><RedoIcon /></Tool>
          <Tool $ml={27}><MoreIcon /></Tool>
        </QuickBar>
        <DocTitle>
          <ExcelLogo />
          <DocName>2025YearCalendar</DocName>
          <Tool $ml={9}><Chevron color="#777" /></Tool>
        </DocTitle>
        <SearchArea>
          <SearchBox>
            <SearchIcon />
            <span>Search (Cmd + Ctrl + U)</span>
          </SearchBox>
          <Tool $ml={30}><PeopleIcon /></Tool>
        </SearchArea>
      </TitleBar>

      <TabRow>
        {RIBBON_TABS.map((tab) => (
          <RibbonTab key={tab.name} $w={tab.w} $active={tab.name === "Home"}>{tab.name}</RibbonTab>
        ))}
        <TabActions>
          <CommentsButton><CommentIcon /><span>Comments</span></CommentsButton>
          <ShareButton><ShareIcon /><span>Share</span><Chevron color="#fff" /></ShareButton>
        </TabActions>
      </TabRow>

      <Ribbon>
        <Group $w={208}>
          <LargeButton $w={68} $ml={33}>
            <LargeIcons $top={9}><PasteIcon /></LargeIcons>
            <LargeLabel>Paste</LargeLabel>
          </LargeButton>
          <ChevronSlot $ml={-3} $mt={34}><Chevron /></ChevronSlot>
          <ClipTools>
            <Tool $ml={14} $w={34}><ScissorsIcon /></Tool>
            <CopyRow>
              <Tool $ml={15}><CopyIcon /></Tool>
              <Tool $ml={12}><Chevron /></Tool>
            </CopyRow>
            <Tool $ml={15}><BrushIcon /></Tool>
          </ClipTools>
        </Group>

        <Group $w={538}>
          <Stack>
            <ToolRow $mt={10}>
              <Select $w={280} $ml={19}>Arial<Chevron /></Select>
              <Select $w={107} $ml={5}>12<Chevron /></Select>
              <Tool $ml={14} $w={31}><GrowGlyph $size={34}>A<SmallCaret /></GrowGlyph></Tool>
              <Tool $ml={24} $w={28}><GrowGlyph $size={28}>A<SmallCaret down /></GrowGlyph></Tool>
            </ToolRow>
            <ToolRow $mt={17}>
              <Tool $ml={35} $w={16}><BoldGlyph>B</BoldGlyph></Tool>
              <Tool $ml={37} $w={12}><ItalicGlyph>I</ItalicGlyph></Tool>
              <Tool $ml={36} $w={18}><UnderGlyph>U</UnderGlyph></Tool>
              <Tool $ml={22}><Chevron /></Tool>
              <ThinLine $ml={23} />
              <Tool $ml={23}><BorderIcon /></Tool>
              <Tool $ml={16}><Chevron /></Tool>
              <ThinLine $ml={23} />
              <Tool $ml={27}><FillIcon /></Tool>
              <Tool $ml={14}><Chevron /></Tool>
              <Tool $ml={18}><FontColor>A</FontColor></Tool>
              <Tool $ml={14}><Chevron /></Tool>
            </ToolRow>
          </Stack>
        </Group>

        <Group $w={400}>
          <Stack>
            <ToolRow $mt={10}>
              <Tool $ml={29}><Lines widths={[28, 16, 28]} top={2} /></Tool>
              <ActiveTool $ml={14}><Lines widths={[28, 16, 28]} top={9} /></ActiveTool>
              <Tool $ml={15}><Lines widths={[16, 28, 28]} top={16} /></Tool>
              <ThinLine $ml={27} />
              <Tool $ml={22}><OrientIcon /></Tool>
              <Tool $ml={13}><Chevron /></Tool>
              <ThinLine $ml={22} />
              <Tool $ml={27}><ParaIcon /></Tool>
              <Tool $ml={16}><Chevron /></Tool>
            </ToolRow>
            <ToolRow $mt={17}>
              <Tool $ml={29}><LinesLR /></Tool>
              <ActiveTool $ml={14}><Lines widths={[28, 18, 28, 18]} top={6} gap={9.2} /></ActiveTool>
              <Tool $ml={15}><LinesLR right /></Tool>
              <ThinLine $ml={27} />
              <Tool $ml={25}><Indent /></Tool>
              <Tool $ml={24}><Indent flip /></Tool>
            </ToolRow>
          </Stack>
        </Group>

        <Group $w={108}>
          <Stack>
            <ToolRow $mt={10}>
              <Tool $ml={27}><WrapIcon /></Tool>
              <Tool $ml={12}><Chevron /></Tool>
            </ToolRow>
            <ToolRow $mt={17}>
              <Tool $ml={23}><MergeIcon /></Tool>
              <Tool $ml={16}><Chevron /></Tool>
            </ToolRow>
          </Stack>
        </Group>

        <Group $w={350}>
          <Stack>
            <ToolRow $mt={10}>
              <Select $w={308} $ml={20}>General<Chevron /></Select>
            </ToolRow>
            <ToolRow $mt={17}>
              <Tool $ml={34} $w={16}><NumGlyph $size={36}>$</NumGlyph></Tool>
              <Tool $ml={23}><Chevron /></Tool>
              <Tool $ml={19} $w={31}><NumGlyph $size={36}>%</NumGlyph></Tool>
              <Tool $ml={27} $w={18}><CommaStyleIcon /></Tool>
              <ThinLine $ml={32} />
              <Tool $ml={22}><DecimalIcon /></Tool>
              <Tool $ml={21}><DecimalIcon more /></Tool>
            </ToolRow>
          </Stack>
        </Group>

        <Group $w={364}>
          <LargeButton $w={114} $ml={23}>
            <LargeIcons $top={15}>
              <Tool $ml={16}><ConditionalIcon /></Tool>
              <ChevronSlot $ml={14} $mt={18}><Chevron /></ChevronSlot>
            </LargeIcons>
            <LargeLabel>Conditional<br />Formatting</LargeLabel>
          </LargeButton>
          <LargeButton $w={114}>
            <LargeIcons $top={15}>
              <Tool $ml={17}><TableIcon /></Tool>
              <ChevronSlot $ml={9} $mt={18}><Chevron /></ChevronSlot>
            </LargeIcons>
            <LargeLabel>Format<br />as Table</LargeLabel>
          </LargeButton>
          <LargeButton $w={84}>
            <LargeIcons $top={15}>
              <Tool $ml={3}><StylesIcon /></Tool>
              <ChevronSlot $ml={9} $mt={18}><Chevron /></ChevronSlot>
            </LargeIcons>
            <LargeLabel>Cell<br />Styles</LargeLabel>
          </LargeButton>
        </Group>

        <Group $w={192}>
          <CellStack>
            <CellRow><InsertCells /><Tool $ml={12}>Insert</Tool><Tool $ml={12}><Chevron /></Tool></CellRow>
            <CellRow><DeleteCells /><Tool $ml={12}>Delete</Tool><Tool $ml={12}><Chevron /></Tool></CellRow>
            <CellRow><FormatCells /><Tool $ml={12}>Format</Tool><Tool $ml={12}><Chevron /></Tool></CellRow>
          </CellStack>
        </Group>

        <Group $w={308}>
          <CellStack>
            <EditRow><Tool $ml={28}><SigmaIcon /></Tool><Tool $ml={15}><Chevron /></Tool></EditRow>
            <EditRow><Tool $ml={24}><FillDown /></Tool><Tool $ml={11}><Chevron /></Tool></EditRow>
            <EditRow><Tool $ml={24}><EraserIcon /></Tool><Tool $ml={11}><Chevron /></Tool></EditRow>
          </CellStack>
          <LargeButton $w={100}>
            <LargeIcons $top={10}>
              <Tool $ml={10}><SortIcon /></Tool>
              <ChevronSlot $ml={12} $mt={29}><Chevron /></ChevronSlot>
            </LargeIcons>
            <LargeLabel>Sort &amp;<br />Filter</LargeLabel>
          </LargeButton>
          <LargeButton $w={98}>
            <LargeIcons $top={9}>
              <Tool $ml={10}><FindIcon /></Tool>
              <ChevronSlot $ml={13} $mt={30}><Chevron /></ChevronSlot>
            </LargeIcons>
            <LargeLabel>Find &amp;<br />Select</LargeLabel>
          </LargeButton>
        </Group>

        <Group $w={126}>
          <LargeButton $w={122}>
            <LargeIcons $top={9} $center><AddInsIcon /></LargeIcons>
            <LargeLabel>Add-ins</LargeLabel>
          </LargeButton>
        </Group>

        <Group $w={124} $last>
          <LargeButton $w={124}>
            <LargeIcons $top={6} $center><AnalyzeIcon /></LargeIcons>
            <LargeLabel>Analyze<br />Data</LargeLabel>
          </LargeButton>
        </Group>
      </Ribbon>

      <FormulaBar>
        <NameBox>AL10<Stepper /></NameBox>
        <Tool $ml={32}><CancelIcon /></Tool>
        <Tool $ml={32}><ConfirmIcon /></Tool>
        <FxGlyph>fx</FxGlyph>
        <FxDivider />
        <FormulaEnd><Chevron color="#666" /></FormulaEnd>
      </FormulaBar>

      <Sheet>
        <SheetGrid>
          <Corner><CornerMark /></Corner>
          {COLUMN_NAMES.map((name) => <ColHead key={name}>{name}</ColHead>)}
          <RowHead>1</RowHead>
          {MONTHS.map((month) => (
            <MonthHead key={month.name} $fill={month.head}>{month.name}</MonthHead>
          ))}
          {Array.from({ length: 31 }, (_, i) => i + 2).map((row) => (
            <React.Fragment key={row}>
              <RowHead $on={row === SELECTED_ROW}>{row}</RowHead>
              {dayRow(row)}
            </React.Fragment>
          ))}
          <RowHead>33</RowHead>
          {COLUMN_NAMES.map((name) => <SheetEdge key={name} />)}
        </SheetGrid>
      </Sheet>

      <SheetTabs>
        <TabNav><NavArrow /><NavArrow right /></TabNav>
        <ActiveSheet>2025YearCalendar</ActiveSheet>
        <AddSheet><PlusIcon /></AddSheet>
      </SheetTabs>

      <StatusBar>
        <Ready>Ready</Ready>
        <A11yIcon />
        <A11yText>Accessibility: Good to go</A11yText>
        <StatusRight>
          <ViewButton $on $w={74}><GridViewIcon /></ViewButton>
          <ViewButton $w={71}><PageViewIcon /></ViewButton>
          <ViewButton $w={70}><BreakViewIcon /></ViewButton>
          <Tool $ml={16}><MinusIcon /></Tool>
          <ZoomTrack />
          <Tool $ml={14}><PlusIcon size={16} /></Tool>
          <ZoomValue>80%</ZoomValue>
        </StatusRight>
      </StatusBar>
    </Page>
  );
}
